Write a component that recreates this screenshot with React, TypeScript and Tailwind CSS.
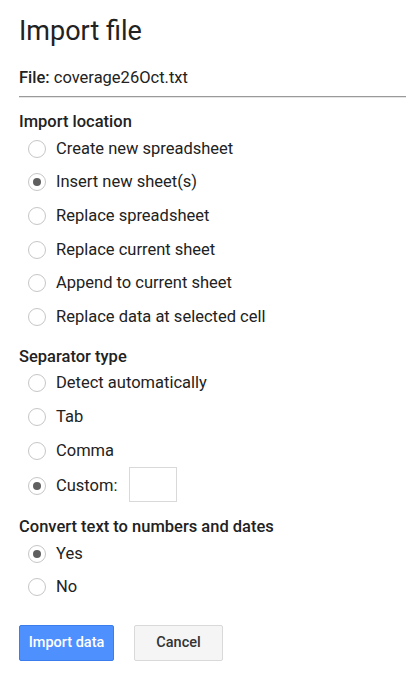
import { useState } from 'react';

type Option = { label: string; value: string };

const locations: Option[] = [
  { label: 'Create new spreadsheet', value: 'create' },
  { label: 'Insert new sheet(s)', value: 'insert' },
  { label: 'Replace spreadsheet', value: 'replace' },
  { label: 'Replace current sheet', value: 'replaceSheet' },
  { label: 'Append to current sheet', value: 'append' },
  { label: 'Replace data at selected cell', value: 'replaceCell' },
];

const separators: Option[] = [
  { label: 'Detect automatically', value: 'auto' },
  { label: 'Tab', value: 'tab' },
  { label: 'Comma', value: 'comma' },
  { label: 'Custom:', value: 'custom' },
];

const convertOptions: Option[] = [
  { label: 'Yes', value: 'yes' },
  { label: 'No', value: 'no' },
];

function Radio({ checked }: { checked: boolean }) {
  return (
    <span className="flex h-[18px] w-[18px] shrink-0 items-center justify-center rounded-full border border-[#c6c6c6] bg-white">
      {checked && <span className="h-[8px] w-[8px] rounded-full bg-[#5f5f5f]" />}
    </span>
  );
}

function RadioRow({
  option,
  checked,
  onSelect,
  children,
}: {
  option: Option;
  checked: boolean;
  onSelect: (v: string) => void;
  children?: React.ReactNode;
}) {
  return (
    <div
      className={`flex cursor-pointer items-center pl-[9px] ${children ? 'h-[37.2px]' : 'h-[33.6px]'}`}
      onClick={() => onSelect(option.value)}
    >
      <Radio checked={checked} />
      <span className="ml-[10px] text-[16.5px] leading-[20px] text-[#222]">{option.label}</span>
      {children}
    </div>
  );
}

export default function App() {
  const [location, setLocation] = useState('insert');
  const [separator, setSeparator] = useState('custom');
  const [convert, setConvert] = useState('yes');

  return (
    <div className="h-[678px] w-[416px] overflow-hidden bg-white pl-[19px] pr-[10px] pt-[15px] font-['Roboto',sans-serif] text-[#222]">
      <h1 className="text-[27px] leading-[32px] font-normal text-[#222]">Import file</h1>

      <p className="mt-[21px] text-[16.5px] leading-[20px]">
        <span className="font-medium">File:</span> coverage26Oct.txt
      </p>
      <div className="mt-[8px] border-t border-[#9a9a9a] shadow-[0_1px_0_#e5e5e5]" />

      <h2 className="mt-[15px] text-[16.5px] leading-[20px] font-medium">Import location</h2>
      <div>
        {locations.map((o) => (
          <RadioRow key={o.value} option={o} checked={location === o.value} onSelect={setLocation} />
        ))}
      </div>

      <h2 className="mt-[13px] text-[16.5px] leading-[20px] font-medium">Separator type</h2>
      <div>
        {separators.map((o) => (
          <RadioRow key={o.value} option={o} checked={separator === o.value} onSelect={setSeparator}>
            {o.value === 'custom' && (
              <input
                type="text"
                className="mb-[3px] ml-[12px] h-[35px] w-[48px] border border-[#d9d9d9] bg-white outline-none"
              />
            )}
          </RadioRow>
        ))}
      </div>

      <h2 className="mt-[12.4px] text-[16.5px] leading-[20px] font-medium">Convert text to numbers and dates</h2>
      <div>
        {convertOptions.map((o) => (
          <RadioRow key={o.value} option={o} checked={convert === o.value} onSelect={setConvert} />
        ))}
      </div>

      <div className="mt-[20.6px] flex gap-[20px]">
        <button className="h-[36px] w-[95px] rounded-[2px] border border-[#3b7ded] bg-[#4d90fe] text-[14.5px] font-medium text-white">
          Import data
        </button>
        <button className="h-[36px] w-[89px] rounded-[2px] border border-[#d9d9d9] bg-[#f5f5f5] text-[14.5px] font-medium text-[#333]">
          Cancel
        </button>
      </div>
    </div>
  );
}
